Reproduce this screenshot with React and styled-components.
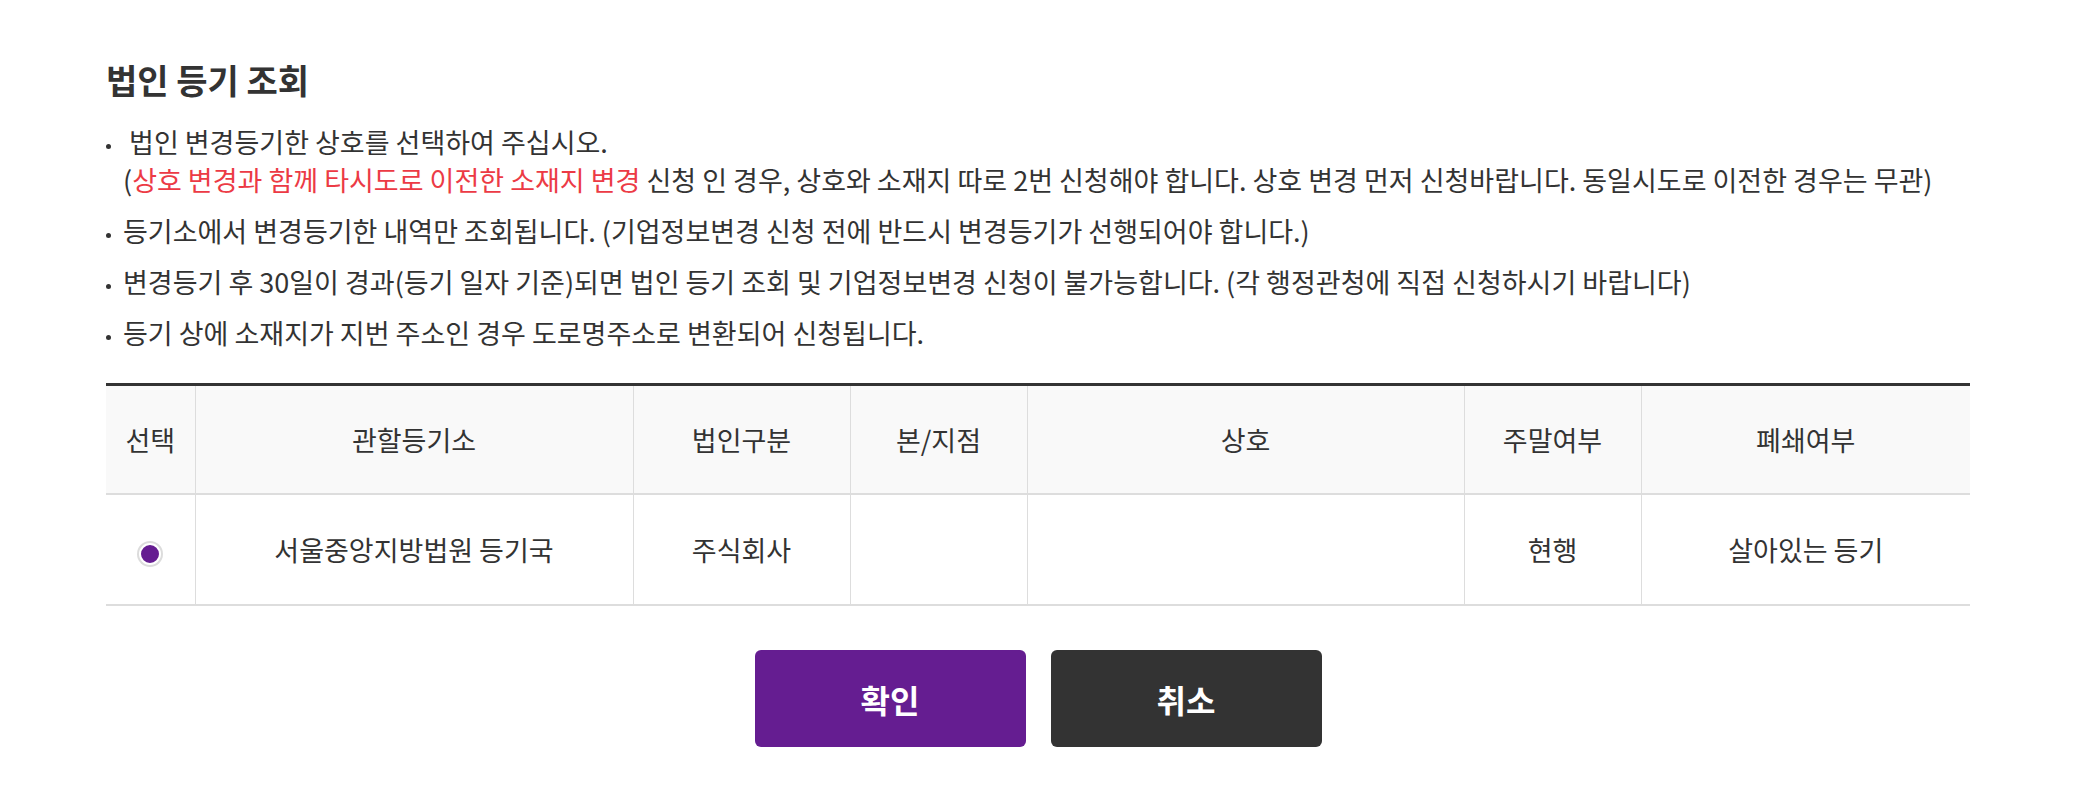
import React from "react";
import styled, { createGlobalStyle } from "styled-components";

const GlobalStyle = createGlobalStyle`
    body {
        margin: 0;
        background: #fff;
        color: #333;
        font-family: "Noto Sans CJK KR", "Noto Sans", sans-serif;
    }
`

const Page = styled.div`
    padding: 60px 110px 60px 106px;
`

const Title = styled.h2`
    margin: 0;
    font-size: 34px;
    line-height: 40px;
    font-weight: 700;
    color: #333;
`

const NoticeList = styled.ul`
    list-style: none;
    margin: 23px 0 0;
    padding: 0;
    display: flex;
    flex-direction: column;
    gap: 13px;
`

const Notice = styled.li`
    display: flex;
    align-items: flex-start;
    gap: 12px;
    font-size: 27px;
    line-height: 38px;
    color: #333;
`

const Dot = styled.span`
    flex: none;
    width: 5px;
    height: 5px;
    margin-top: 21px;
    border-radius: 50%;
    background: #333;
`

const Red = styled.span`
    color: #ec3a45;
`

const Table = styled.table`
    width: 100%;
    margin-top: 31px;
    border-collapse: collapse;
    border-top: 3px solid #333;
    border-bottom: 2px solid #ddd;
    table-layout: fixed;
    font-size: 27px;
    color: #333;
`

const Th = styled.th`
    height: 107px;
    padding: 0;
    font-weight: 400;
    background: #f9f9f9;
    border-bottom: 2px solid #ddd;
    border-left: 1px solid #ddd;
    &:first-child { border-left: 0; }
`

const Td = styled.td`
    height: 109px;
    padding: 0;
    text-align: center;
    border-left: 1px solid #ddd;
    &:first-child { border-left: 0; }
`

const Radio = styled.span`
    display: inline-block;
    vertical-align: middle;
    width: 18px;
    height: 18px;
    border: 2px solid #fff;
    border-radius: 50%;
    background: #651d91;
    box-shadow: 0 0 0 2px #dcdcdc;
`

const Buttons = styled.div`
    display: flex;
    justify-content: center;
    gap: 25px;
    margin-top: 44px;
`

const Button = styled.button`
    width: 271px;
    height: 97px;
    border: 0;
    border-radius: 6px;
    background: ${p => p.$dark ? "#333" : "#651d91"};
    color: #fff;
    font-family: inherit;
    font-size: 32px;
    font-weight: 700;
    cursor: pointer;
`

const columns = [
    { label: "선택", width: 89 },
    { label: "관할등기소", width: 438 },
    { label: "법인구분", width: 217 },
    { label: "본/지점", width: 177 },
    { label: "상호", width: 437 },
    { label: "주말여부", width: 177 },
    { label: "폐쇄여부", width: 329 },
]

export default function App() {
    return (
        <Page>
            <GlobalStyle />
            <Title>법인 등기 조회</Title>
            <NoticeList>
                <Notice>
                    <Dot />
                    <div>
                        &nbsp;법인 변경등기한 상호를 선택하여 주십시오.<br />
                        (<Red>상호 변경과 함께 타시도로 이전한 소재지 변경</Red> 신청 인 경우, 상호와 소재지 따로 2번 신청해야 합니다. 상호 변경 먼저 신청바랍니다. 동일시도로 이전한 경우는 무관)
                    </div>
                </Notice>
                <Notice>
                    <Dot />
                    <div>등기소에서 변경등기한 내역만 조회됩니다. (기업정보변경 신청 전에 반드시 변경등기가 선행되어야 합니다.)</div>
                </Notice>
                <Notice>
                    <Dot />
                    <div>변경등기 후 30일이 경과(등기 일자 기준)되면 법인 등기 조회 및 기업정보변경 신청이 불가능합니다. (각 행정관청에 직접 신청하시기 바랍니다)</div>
                </Notice>
                <Notice>
                    <Dot />
                    <div>등기 상에 소재지가 지번 주소인 경우 도로명주소로 변환되어 신청됩니다.</div>
                </Notice>
            </NoticeList>
            <Table>
                <colgroup>
                    {columns.map(c => <col key={c.label} style={{ width: c.width }} />)}
                </colgroup>
                <thead>
                    <tr>
                        {columns.map(c => <Th key={c.label}>{c.label}</Th>)}
                    </tr>
                </thead>
                <tbody>
                    <tr>
                        <Td><Radio /></Td>
                        <Td>서울중앙지방법원 등기국</Td>
                        <Td>주식회사</Td>
                        <Td></Td>
                        <Td></Td>
                        <Td>현행</Td>
                        <Td>살아있는 등기</Td>
                    </tr>
                </tbody>
            </Table>
            <Buttons>
                <Button>확인</Button>
                <Button $dark>취소</Button>
            </Buttons>
        </Page>
    )
}
